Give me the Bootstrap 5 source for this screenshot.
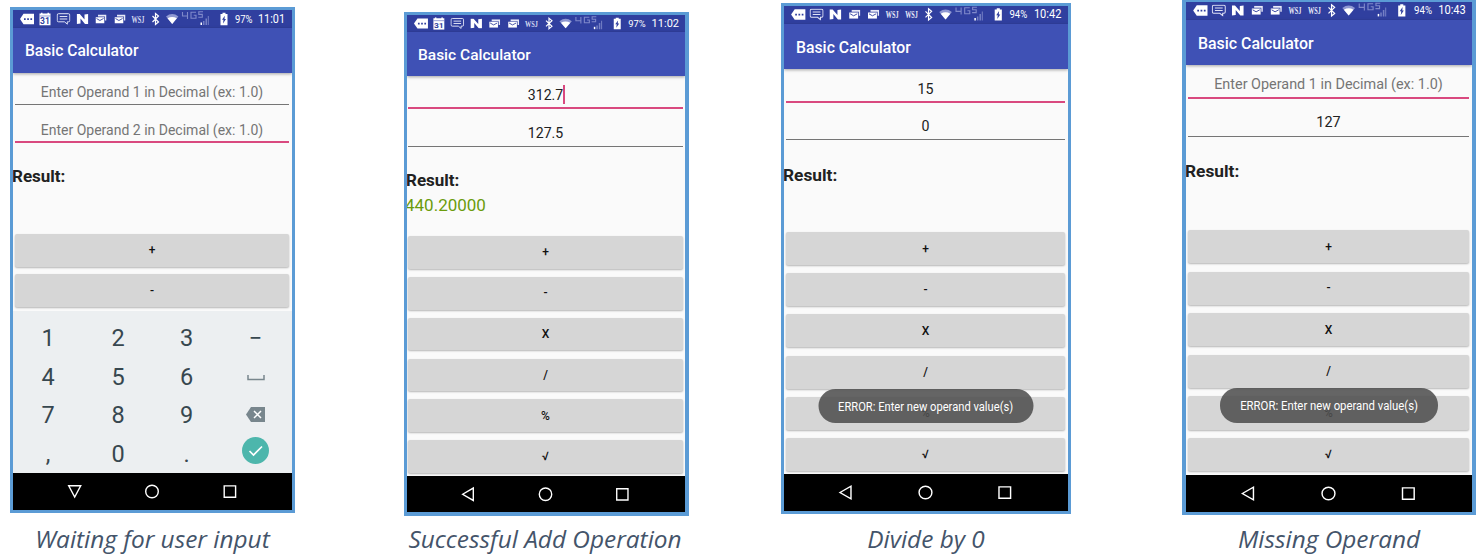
<!DOCTYPE html>
<html lang="en">
<head>
<meta charset="utf-8">
<title>Basic Calculator</title>
<link href="https://cdn.jsdelivr.net/npm/bootstrap@5.3.0/dist/css/bootstrap.min.css" rel="stylesheet">
<style>
body{font-family:Roboto,"Liberation Sans",sans-serif;width:1484px;height:555px;overflow:hidden;background:#fff}
.shots{display:grid;grid-template-columns:285px 285px 290px 294px;column-gap:0;padding-left:10px}
.s1{--top:7px;--h:506px;--st:18px;--bar:45px;--f1:32px;--f2:38px;--res:91px;--bh:32.5px;--gap:7.8px;--nav:37px;--cap:9.5px;--ts:15.6px;--fs:14px}
.s2{--top:12px;--h:504px;--st:17px;--bar:44px;--f1:32.5px;--f2:38.2px;--res:89.5px;--bh:32.6px;--gap:8.2px;--nav:36.5px;--cap:6.5px;--ts:15.5px;--fs:14.1px}
.s3{--top:3px;--h:511px;--st:18px;--bar:45px;--f1:33.5px;--f2:37.5px;--res:92px;--bh:33px;--gap:8.2px;--nav:37px;--cap:9px;--ts:15.8px;--fs:14.2px}
.s4{--top:-1px;--h:516px;--st:18px;--bar:45px;--f1:33.5px;--f2:38px;--res:93.5px;--bh:33.2px;--gap:8.4px;--nav:37px;--cap:8px;--ts:15.9px;--fs:14.4px}
.s2{margin-left:109px;margin-right:-109px}
.s3{margin-left:201px;margin-right:-201px}
figure{padding-top:var(--top);margin:0}
.s4{margin:-1px -312px 0 312px;padding-top:0}
.phone{height:var(--h);border:3px solid #5b9bd5;width:100%;background:#fafafa;overflow:hidden}
.s2 .phone{border-right-width:4px;border-bottom-width:4px}
.s4 .phone{border-left-width:4px;border-right-width:4px}
.statusbar{height:var(--st);background:#303f9f}
.appbar{height:var(--bar);background:#3f51b5;color:#fff;font-weight:500;font-size:var(--ts);padding:2px 0 0 12px;box-shadow:0 1px 3px rgba(0,0,0,.35);z-index:1}
.s2 .appbar{padding:4px 0 0 11px}
.field{margin:0 3px 0 2px;height:var(--f1);border-bottom:1px solid #757575;font-size:var(--fs);color:#212121;line-height:1;padding-bottom:5.5px}
.field.second{height:var(--f2)}
.field.hint{color:#757575}
.field.active{border-bottom:2px solid #d9497f;padding-bottom:4.5px}
.s2 .field,.s2 .key{margin-left:-1px;margin-right:-1px}
.s2 .field{margin:0 2px 0 1px}
.caret{width:2px;height:19px;background:#d9497f;margin:0 -2px -2px 0}
.result{height:var(--res);padding-top:23px;font-size:17px;line-height:20px;color:#212121}
.result strong{font-weight:700;margin-left:-1px}
.s3 .result,.s4 .result{padding-top:24.5px;font-size:17.3px}
.answer{color:#6b9c0c;padding-top:5px;margin-left:-2px}
.keys{gap:var(--gap);padding:0 3px 0 2px}
.key{height:var(--bh);border:0;border-radius:2px;background:#d6d6d6;color:#111;font-weight:500;font-size:12px;line-height:1;padding:0;box-shadow:0 1px 2px rgba(0,0,0,.28)}
.androidnav{height:var(--nav);background:#000}
.keypad{display:grid;grid-template-columns:70px 70px 67px 71px;grid-auto-rows:38.7px;height:162px;padding-top:8.5px;background:#eceff1;color:#37474f;font-size:23.5px;line-height:1}
.toast-pill{left:50%;transform:translateX(-50%);bottom:88px;width:215px;height:34px;border-radius:17px;background:rgba(80,80,80,.88);color:#fff;font-size:12px;white-space:nowrap}
.s4 .toast-pill{width:218px;height:35px;bottom:89px}
.toast-pill span{transform:scaleX(.93);flex:none;padding-top:1px}
.s4 .toast-pill span{transform:scaleX(.945)}
figcaption{font-family:"Open Sans","Noto Sans",sans-serif;font-style:italic;font-size:24.4px;line-height:32px;color:#44546a;white-space:nowrap;margin-top:var(--cap)}
.s2 figcaption{margin-left:-3px}
</style>
<script src="https://cdn.jsdelivr.net/npm/bootstrap@5.3.0/dist/js/bootstrap.bundle.min.js"></script>
</head>
<body>
<svg width="0" height="0" class="position-absolute" aria-hidden="true">
<defs>
<symbol id="more" viewBox="0 0 14 12" overflow="visible"><path d="M0 6 3.500 .8H14v10.400H3.500z" fill="#fff"/><path d="M4 5.200h1.700V7H4zM7.200 5.200h1.700V7H7.200zM10.400 5.200h1.700V7h-1.700z" fill="#303f9f"/></symbol>
<symbol id="cal" viewBox="0 0 12 13"><path d="M.5 1H2V0h1.500v1h5V0H10v1h1.500v12H.5z" fill="#fff"/><path d="M.5 3.500h11" stroke="#6f79c4" stroke-width=".7"/><text x="6" y="11.500" font-size="8.500" font-weight="700" text-anchor="middle" fill="#303f9f">31</text></symbol>
<symbol id="chat" viewBox="0 0 14 12"><path d="M2 .7h10q1.300 0 1.300 1.300v5.500q0 1.300-1.300 1.300h-1.200v2.400L8 8.800H2Q.7 8.800.7 7.500V2Q.7.700 2 .7zM3.200 3.500h7.600M3.200 6h7.600" fill="none" stroke="#dfe2f5"/></symbol>
<symbol id="nn" viewBox="0 0 12 11"><path d="M.3.500h3L8 6V1l3.700-.5v10H8.500L4 5v5L.3 10.500z" fill="#fff"/></symbol>
<symbol id="mail" viewBox="0 0 11 9"><path d="M2.500 0H11v6H9.500V2h-7z" fill="#e8eaf8"/><path d="M0 2.700h8.800V9H0z" fill="#fff"/><path d="m1 4 3.400 2L8 4" fill="none" stroke="#303f9f" stroke-width=".9"/></symbol>
<symbol id="tail" viewBox="0 0 90 18" overflow="visible">
<path d="m3.500 6 6 6-3 2.500v-11l3 2.500-6 6" fill="none" stroke="#fff" stroke-width="1.200"/>
<path d="M17 6.500q6.200-4.800 12.400 0L23.200 14z" fill="#8f98d2"/><path d="M18.500 8.300q4.700-2.800 9.400 0L23.200 14z" fill="#fff"/>
<path d="M33.500 3v4h5M38.500 3v7M47 3.300h-5v6h5v-3h-2.300M54 2.800h-4.200v2.600h3.500v2.800h-4" transform="translate(0 -1)" fill="none" stroke="#7f89ca" stroke-width="1.100"/>
<path d="M51.500 12.500h1.500V15h-1.500z" fill="#fff"/><path d="M54 11h1.500v4H54zM56.500 8.500H58V15h-1.500zM58.800 6h1V15h-1z" fill="#7580c5"/>
<path d="M71.500 4h2V2.800h3V4h2v11.200h-7z" fill="#fff"/><path d="m75.800 5.700-2.800 4.100h1.500l-.5 3.700 3-4.500h-1.500z" fill="#303f9f"/></symbol>
<symbol id="home" viewBox="0 0 279 37"><circle cx="139" cy="18.500" r="6.300" fill="none" stroke="#fff" stroke-width="1.400"/><path d="M211.200 12.900h11.400v11.400h-11.400z" fill="none" stroke="#fff" stroke-width="1.400"/></symbol>
<symbol id="back" viewBox="0 0 279 37"><path d="M55 18.500 65.800 12.200v12.600z" fill="none" stroke="#fff" stroke-width="1.400"/></symbol>
<symbol id="down" viewBox="0 0 279 37"><path d="M55.700 12.800h12L61.700 24z" fill="none" stroke="#fff" stroke-width="1.400"/></symbol>
<symbol id="set-a" viewBox="0 0 279 18"><use href="#more" x="7" y="3" width="14" height="12"/><use href="#cal" x="26" y="2.500" width="12" height="13"/><use href="#chat" x="43.500" y="3" width="14" height="12"/><use href="#nn" x="63.500" y="3.500" width="12" height="11"/><use href="#mail" x="82.500" y="4.500" width="11" height="9"/><use href="#mail" x="101.500" y="4.500" width="11" height="9"/><text x="118.500" y="12.500" font-family="Liberation Serif" font-weight="700" font-size="9.500" textLength="13" lengthAdjust="spacingAndGlyphs" fill="#d5d9f0">WSJ</text><use href="#tail" x="136" y="0" width="90" height="18"/></symbol>
<symbol id="set-b" viewBox="0 0 279 18"><use href="#more" x="7" y="2.500" width="14" height="12"/><use href="#chat" x="25" y="2.500" width="14" height="12"/><use href="#nn" x="44.500" y="3" width="12" height="11"/><use href="#mail" x="64" y="3.800" width="11" height="9"/><use href="#mail" x="82.500" y="3.800" width="11" height="9"/><g font-family="Liberation Serif" font-weight="700" font-size="9.500" fill="#e8eaf8"><text x="100" y="11.800" textLength="12.500" lengthAdjust="spacingAndGlyphs">WSJ</text><text x="119" y="11.800" textLength="12.500" lengthAdjust="spacingAndGlyphs">WSJ</text></g><use href="#tail" x="135.500" y="-.6" width="90" height="18"/></symbol>
</defs></svg>

<main class="shots">
<figure class="s1">
 <div class="phone d-flex flex-column">
  <svg class="statusbar d-block w-100 flex-shrink-0" viewBox="0 0 279 18" preserveAspectRatio="none"><use href="#set-a" width="279" height="18"/><g fill="#fff"><text x="222" y="12.700" font-size="10" textLength="17.500" lengthAdjust="spacingAndGlyphs">97%</text><text x="245" y="13" font-size="12" textLength="27" lengthAdjust="spacingAndGlyphs">11:01</text></g></svg>
  <header class="appbar d-flex align-items-center flex-shrink-0">Basic Calculator</header>
  <div class="field hint d-flex align-items-end justify-content-center">Enter Operand 1 in Decimal (ex: 1.0)</div>
  <div class="field second hint active d-flex align-items-end justify-content-center">Enter Operand 2 in Decimal (ex: 1.0)</div>
  <div class="result"><strong>Result:</strong></div>
  <div class="keys d-flex flex-column"><button class="key">+</button><button class="key">-</button></div>
  <div class="keypad mt-auto text-center align-items-center flex-shrink-0">
   <span>1</span><span>2</span><span>3</span><span>−</span>
   <span>4</span><span>5</span><span>6</span><svg class="mx-auto" width="18" height="6"><path d="M1 0v4.500h16V0" fill="none" stroke="#78868d" stroke-width="1.500"/></svg>
   <span>7</span><span>8</span><span>9</span><svg class="mx-auto mb-1" width="19" height="15"><path d="M0 7.500 5 0h14v15H5z" fill="#78868d"/><path d="m8 4 7 7m0-7-7 7" stroke="#fff" stroke-width="1.500"/></svg>
   <span>,</span><span>0</span><span>.</span><svg class="mx-auto mb-2" width="27" height="27"><circle cx="13.500" cy="13.500" r="13.500" fill="#4db6ac"/><path d="m7.500 14 4 4 8.500-8.500" fill="none" stroke="#fff" stroke-width="1.700"/></svg>
  </div>
  <svg class="androidnav d-block w-100 flex-shrink-0" viewBox="0 0 279 37"><use href="#down"/><use href="#home"/></svg>
 </div>
 <figcaption class="text-center"><span>Waiting for user input</span></figcaption>
</figure>

<figure class="s2">
 <div class="phone d-flex flex-column">
  <svg class="statusbar d-block w-100 flex-shrink-0" viewBox="0 0 279 18" preserveAspectRatio="none"><use href="#set-a" width="279" height="18"/><g fill="#fff"><text x="222" y="12.200" font-size="10" textLength="17.500" lengthAdjust="spacingAndGlyphs">97%</text><text x="245.500" y="12.500" font-size="12" textLength="27.500" lengthAdjust="spacingAndGlyphs">11:02</text></g></svg>
  <header class="appbar d-flex align-items-center flex-shrink-0">Basic Calculator</header>
  <div class="field active d-flex align-items-end justify-content-center">312.7<i class="caret"></i></div>
  <div class="field second d-flex align-items-end justify-content-center">127.5</div>
  <div class="result"><strong>Result:</strong><div class="answer">440.20000</div></div>
  <div class="keys d-flex flex-column"><button class="key">+</button><button class="key">-</button><button class="key">X</button><button class="key">/</button><button class="key">%</button><button class="key">√</button></div>
  <svg class="androidnav d-block w-100 mt-auto flex-shrink-0" viewBox="0 0 279 37"><use href="#back"/><use href="#home"/></svg>
 </div>
 <figcaption class="text-center"><span>Successful Add Operation</span></figcaption>
</figure>

<figure class="s3">
 <div class="phone position-relative d-flex flex-column">
  <svg class="statusbar d-block w-100 flex-shrink-0" viewBox="0 0 279 18" preserveAspectRatio="none"><use href="#set-b" width="279" height="18"/><g fill="#fff"><text x="221.500" y="11.800" font-size="10" textLength="17.500" lengthAdjust="spacingAndGlyphs">94%</text><text x="245.500" y="12.200" font-size="12" textLength="27" lengthAdjust="spacingAndGlyphs">10:42</text></g></svg>
  <header class="appbar d-flex align-items-center flex-shrink-0">Basic Calculator</header>
  <div class="field active d-flex align-items-end justify-content-center">15</div>
  <div class="field second d-flex align-items-end justify-content-center">0</div>
  <div class="result"><strong>Result:</strong></div>
  <div class="keys d-flex flex-column"><button class="key">+</button><button class="key">-</button><button class="key">X</button><button class="key">/</button><button class="key">%</button><button class="key">√</button></div>
  <svg class="androidnav d-block w-100 mt-auto flex-shrink-0" viewBox="0 0 279 37" preserveAspectRatio="none"><use href="#back"/><use href="#home"/></svg>
  <div class="toast-pill position-absolute d-flex align-items-center justify-content-center"><span>ERROR: Enter new operand value(s)</span></div>
 </div>
 <figcaption class="text-center"><span>Divide by 0</span></figcaption>
</figure>

<figure class="s4">
 <div class="phone position-relative d-flex flex-column">
  <svg class="statusbar d-block w-100 flex-shrink-0" viewBox="0 0 279 18" preserveAspectRatio="none"><use href="#set-b" width="279" height="18"/><g fill="#fff"><text x="222.500" y="11.800" font-size="10" textLength="17.500" lengthAdjust="spacingAndGlyphs">94%</text><text x="246" y="12.200" font-size="12" textLength="27" lengthAdjust="spacingAndGlyphs">10:43</text></g></svg>
  <header class="appbar d-flex align-items-center flex-shrink-0">Basic Calculator</header>
  <div class="field hint active d-flex align-items-end justify-content-center">Enter Operand 1 in Decimal (ex: 1.0)</div>
  <div class="field second d-flex align-items-end justify-content-center">127</div>
  <div class="result"><strong>Result:</strong></div>
  <div class="keys d-flex flex-column"><button class="key">+</button><button class="key">-</button><button class="key">X</button><button class="key">/</button><button class="key">%</button><button class="key">√</button></div>
  <svg class="androidnav d-block w-100 mt-auto flex-shrink-0" viewBox="0 0 279 37" preserveAspectRatio="none"><use href="#back"/><use href="#home"/></svg>
  <div class="toast-pill position-absolute d-flex align-items-center justify-content-center"><span>ERROR: Enter new operand value(s)</span></div>
 </div>
 <figcaption class="text-center"><span>Missing Operand</span></figcaption>
</figure>
</main>
</body>
</html>
